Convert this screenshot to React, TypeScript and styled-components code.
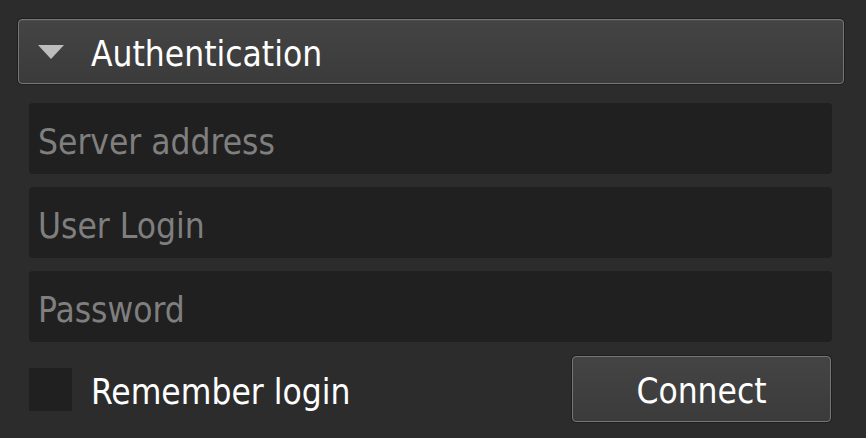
import React from "react";
import styled, { createGlobalStyle } from "styled-components";

const Global = createGlobalStyle`
  html, body { margin: 0; padding: 0; background: #2c2c2c; }
  body { font-family: "DejaVu Sans Condensed", "DejaVu Sans", sans-serif; }
`;

const Page = styled.div`
  width: 866px;
  height: 438px;
  box-sizing: border-box;
  padding: 19px 22px 0 18px;
  background: #2c2c2c;
  display: flex;
  flex-direction: column;
`;

const Header = styled.div`
  height: 65px;
  box-sizing: border-box;
  border: 1px solid #767676;
  border-radius: 4px;
  background: linear-gradient(#444444, #3b3b3b);
  box-shadow: 0 0 0 1px #1e1e1e, inset 0 1px 0 #4d4d4d;
  display: flex;
  align-items: center;
  padding-left: 19px;
  gap: 27px;
`;

const Arrow = styled.svg`
  width: 26px;
  height: 14px;
  flex: none;
`;

const Title = styled.span`
  color: #ffffff;
  font-size: 35px;
  line-height: 1;
  padding-top: 6px;
`;

const Body = styled.div`
  padding: 19px 12px 0 11px;
  display: flex;
  flex-direction: column;
  gap: 13px;
`;

const Field = styled.div`
  height: 71px;
  box-sizing: border-box;
  background: #202020;
  border-radius: 4px;
  display: flex;
  align-items: center;
  padding-left: 9px;
  color: #7f7f7f;
  font-size: 35px;
  padding-top: 6px;
`;

const BottomRow = styled.div`
  display: flex;
  align-items: center;
  justify-content: space-between;
  margin-top: 1px;
  padding-right: 1px;
`;

const CheckLabel = styled.label`
  display: flex;
  align-items: center;
  gap: 19px;
  color: #ffffff;
  font-size: 35px;
`;

const LabelText = styled.span`
  padding-top: 6px;
`;

const Box = styled.span`
  width: 43px;
  height: 43px;
  background: #202020;
  flex: none;
`;

const Button = styled.div`
  width: 259px;
  height: 66px;
  box-sizing: border-box;
  border: 1px solid #767676;
  border-radius: 4px;
  background: linear-gradient(#444444, #3b3b3b);
  box-shadow: 0 0 0 1px #1e1e1e;
  color: #ffffff;
  font-size: 35px;
  display: flex;
  align-items: center;
  justify-content: center;
  padding-top: 4px;
`;

export default function App() {
  return (
    <>
      <Global />
      <Page>
        <Header>
          <Arrow viewBox="0 0 26 14">
            <polygon points="0,0 26,0 13,14" fill="#bdbdbd" />
          </Arrow>
          <Title>Authentication</Title>
        </Header>
        <Body>
          <Field>Server address</Field>
          <Field>User Login</Field>
          <Field>Password</Field>
          <BottomRow>
            <CheckLabel>
              <Box />
              <LabelText>Remember login</LabelText>
            </CheckLabel>
            <Button>Connect</Button>
          </BottomRow>
        </Body>
      </Page>
    </>
  );
}
